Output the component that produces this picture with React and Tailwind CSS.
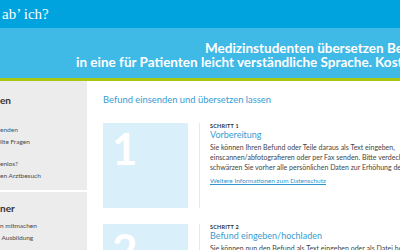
import React from "react";

const steps = [
    {
        number: "1",
        label: "SCHRITT 1",
        title: "Vorbereitung",
        lines: [
            "Sie können Ihren Befund oder Teile daraus als Text eingeben,",
            "einscannen/abfotografieren oder per Fax senden. Bitte verdecken oder",
            "schwärzen Sie vorher alle persönlichen Daten zur Erhöhung des Datenschutzes.",
        ],
        link: "Weitere Informationen zum Datenschutz",
    },
    {
        number: "2",
        label: "SCHRITT 2",
        title: "Befund eingeben/hochladen",
        lines: [
            "Sie können nun den Befund als Text eingeben oder als Datei hochladen.",
        ],
    },
];

function Sidebar() {
    return (
        <aside className="w-[87px] shrink-0 bg-[#ececec] pt-[13px] text-[#4a4a4a] whitespace-nowrap overflow-hidden">
            <h3 className="text-[10px] leading-[12px] font-bold text-[#333]">en</h3>
            <ul className="mt-[18px] text-[6.5px] leading-[12px]">
                <li className="text-[#2f5f86]">enden</li>
                <li>llte Fragen</li>
            </ul>
            <ul className="mt-[10px] text-[6.5px] leading-[12px]">
                <li>enlos?</li>
                <li>en Arztbesuch</li>
            </ul>
            <div className="mt-[8px] h-[2px] bg-white" />
            <h3 className="mt-[10px] text-[10px] leading-[12px] font-bold text-[#333]">ner</h3>
            <ul className="mt-[6px] text-[6.5px] leading-[12px]">
                <li>n mitmachen</li>
                <li>&nbsp;Ausbildung</li>
            </ul>
        </aside>
    );
}

function Step({ step }) {
    return (
        <div className="flex h-[85px]">
            <div className="w-[85px] h-[85px] shrink-0 bg-[#d9eff9] pl-[9px] pt-[3px] text-[44px] leading-[44px] font-bold text-white">
                {step.number}
            </div>
            <div className="ml-[11px] border-l border-[#e8e8e8] pl-[10px] whitespace-nowrap">
                <div className="text-[5.5px] leading-[7px] font-bold tracking-[0.2px] text-[#333]">{step.label}</div>
                <div className="text-[9px] leading-[10px] text-[#3b9bd1]">{step.title}</div>
                <p className="mt-[2px] text-[7px] leading-[10px] text-[#444]">
                    {step.lines.map((line, i) => (
                        <span key={i} className="block">{line}</span>
                    ))}
                </p>
                {step.link && (
                    <a href="#" className="block mt-[4px] text-[6.5px] leading-[10px] text-[#2f95cb] underline">
                        {step.link}
                    </a>
                )}
            </div>
        </div>
    );
}

export default function App() {
    return (
        <div className="w-[400px] h-[250px] overflow-hidden bg-white font-['Lato',sans-serif]">
            <header className="h-[28px] bg-[#00a3de] pl-[2px] font-['Liberation_Serif',serif] text-[15px] leading-[28px] text-white whitespace-nowrap">
                ab’ ich?
            </header>
            <div className="h-[50px] bg-[#3fb9e6] pt-[14px] text-[13.5px] leading-[13.5px] font-bold text-white whitespace-nowrap overflow-hidden">
                <div className="pl-[205px]">Medizinstudenten übersetzen Befunde</div>
                <div className="pl-[76px]">in eine für Patienten leicht verständliche Sprache. Kostenlos.</div>
            </div>
            <div className="h-[3px] bg-[#a6c812]" />
            <div className="flex h-[169px]">
                <Sidebar />
                <main className="flex-1 pl-[16px] pt-[13px] overflow-hidden">
                    <h2 className="text-[9.4px] leading-[12px] text-[#3b9bd1] whitespace-nowrap">
                        Befund einsenden und übersetzen lassen
                    </h2>
                    <div className="mt-[17px] flex flex-col gap-[16px]">
                        {steps.map(step => (
                            <Step key={step.number} step={step} />
                        ))}
                    </div>
                </main>
            </div>
        </div>
    );
}
